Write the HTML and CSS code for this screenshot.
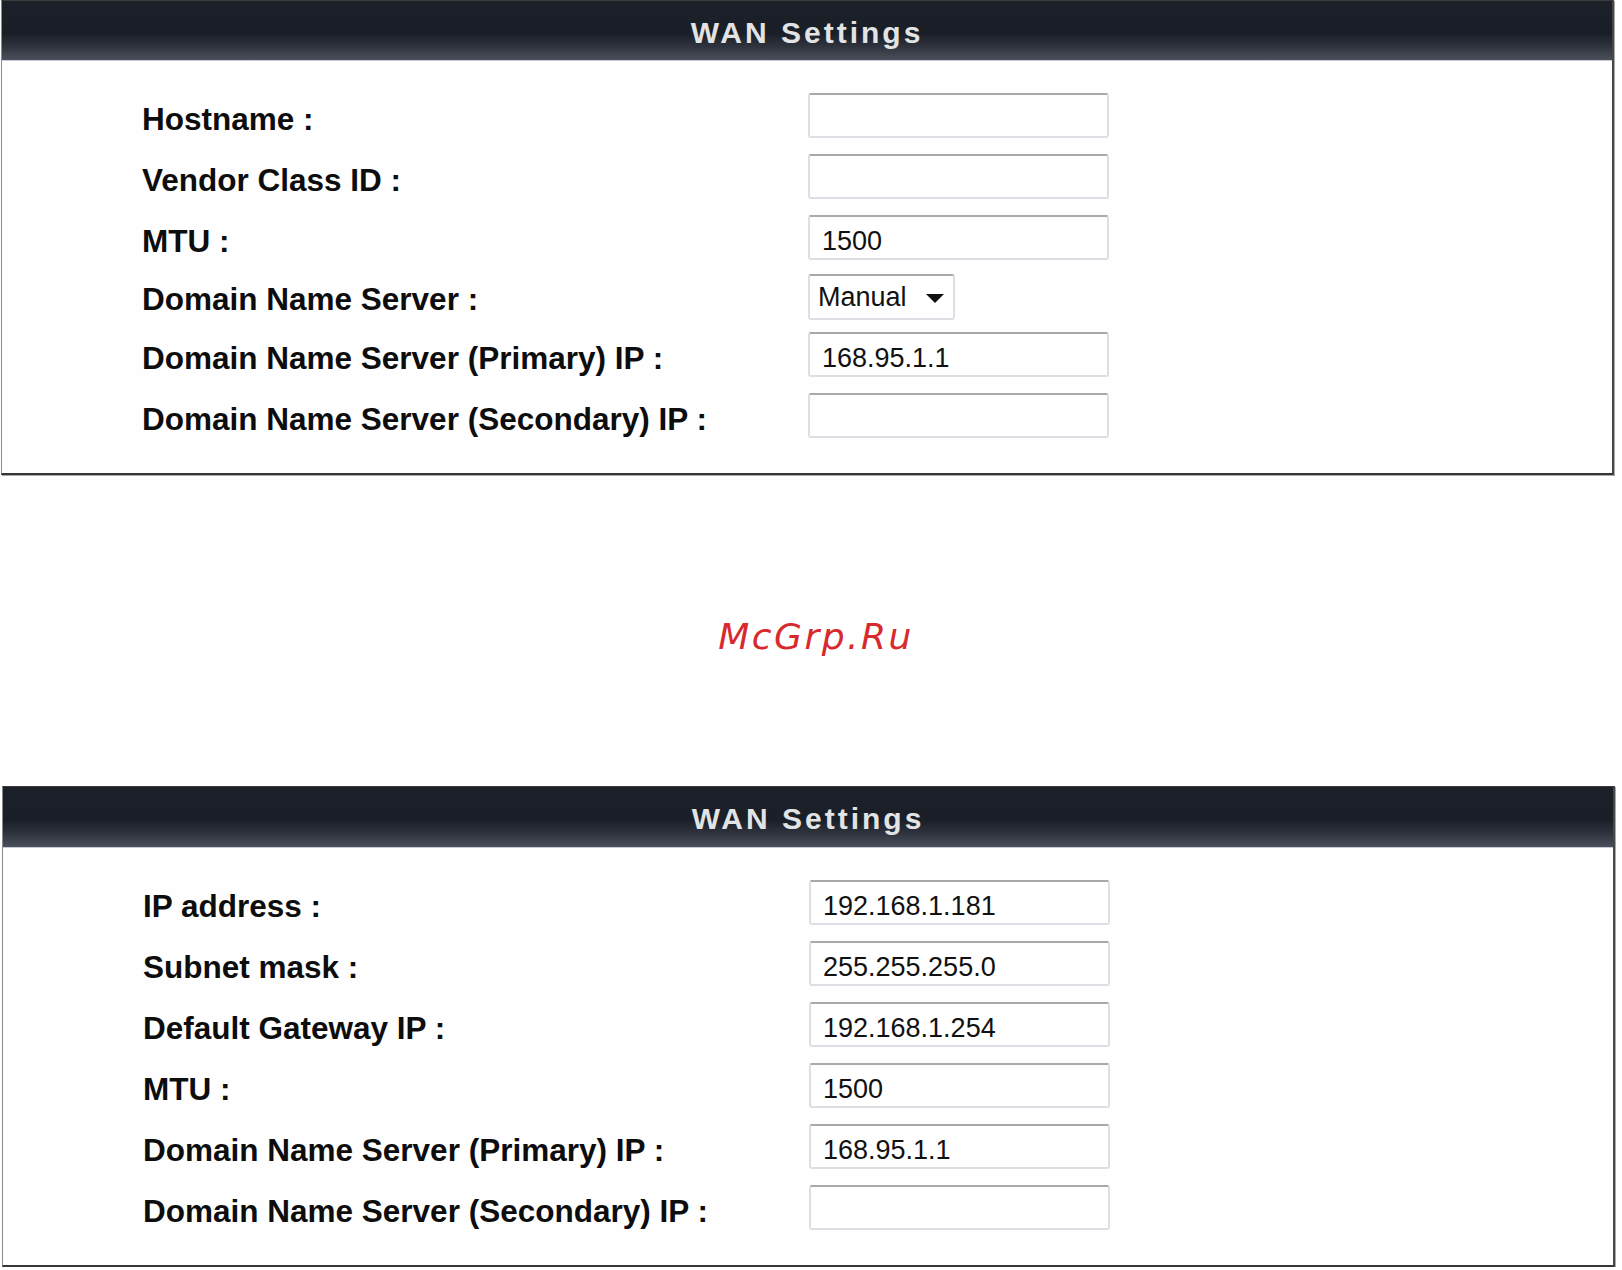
FILE: index.html
```html
<!DOCTYPE html>
<html lang="en">
<head>
  <meta charset="UTF-8" />
  <meta name="viewport" content="width=device-width, initial-scale=1.0"/>
  <title>WAN Settings</title>
  <link rel="stylesheet" href="styles.css">
</head>
<body>
  <div class="panel panel-first">
    <div class="panel-head">WAN Settings</div>
    <div class="panel-body">
      <label class="field-label">Hostname :</label>
      <input class="text-box" type="text" value="" />

      <label class="field-label">Vendor Class ID :</label>
      <input class="text-box" type="text" value="" />

      <label class="field-label">MTU :</label>
      <input class="text-box" type="text" value="1500" />

      <label class="field-label">Domain Name Server :</label>
      <span class="select-wrap">
        <select class="select-box">
          <option>Manual</option>
          <option>Auto</option>
        </select>
      </span>

      <label class="field-label">Domain Name Server (Primary) IP :</label>
      <input class="text-box" type="text" value="168.95.1.1" />

      <label class="field-label">Domain Name Server (Secondary) IP :</label>
      <input class="text-box" type="text" value="" />
    </div>
  </div>

  <div class="watermark">McGrp.Ru</div>

  <div class="panel panel-second">
    <div class="panel-head">WAN Settings</div>
    <div class="panel-body">
      <label class="field-label">IP address :</label>
      <input class="text-box" type="text" value="192.168.1.181" />

      <label class="field-label">Subnet mask :</label>
      <input class="text-box" type="text" value="255.255.255.0" />

      <label class="field-label">Default Gateway IP :</label>
      <input class="text-box" type="text" value="192.168.1.254" />

      <label class="field-label">MTU :</label>
      <input class="text-box" type="text" value="1500" />

      <label class="field-label">Domain Name Server (Primary) IP :</label>
      <input class="text-box" type="text" value="168.95.1.1" />

      <label class="field-label">Domain Name Server (Secondary) IP :</label>
      <input class="text-box" type="text" value="" />
    </div>
  </div>
</body>
</html>
```

FILE: styles.css
```css
* {
  box-sizing: border-box;
}
body {
  margin: 0;
  background: #fff;
  font-family: "Liberation Sans", Arial, sans-serif;
  color: #111;
}
.panel {
  width: 1613px;
  background: #fefefe;
  border-top: 1px solid #3b3b3b;
  border-left: 1px solid #8a8a8a;
  border-right: 2px solid #474747;
  border-bottom: 2px solid #363636;
  box-shadow: 1px 1px 0 #a8a8a8;
}
.panel-first {
  margin-left: 1px;
}
.panel-second {
  margin-left: 2px;
}
.panel-head {
  height: 61px;
  padding-top: 5px;
  line-height: 54px;
  text-align: center;
  font-size: 30px;
  font-weight: bold;
  letter-spacing: 3px;
  color: #e2e3e5;
  background: linear-gradient(to bottom, #1b2029 0%, #191e27 55%, #2f343e 78%, #4b505c 100%);
  border-bottom: 1px solid #c6cad6;
}
.panel-first .panel-head {
  height: 60px;
}
.panel-body {
  display: grid;
  grid-template-columns: 666px 301px;
  row-gap: 16px;
  align-items: center;
  padding: 32px 0 35px 140px;
}
.panel-second .panel-body {
  padding-top: 32px;
  padding-bottom: 35px;
}
.field-label {
  padding-top: 6px;
  font-size: 31.5px;
  line-height: 34px;
  font-weight: bold;
  color: #0d0d0d;
  white-space: nowrap;
}
.text-box {
  width: 301px;
  height: 45px;
  margin: 0;
  padding: 8px 10px 0 12px;
  font-family: "Liberation Sans", Arial, sans-serif;
  font-size: 27px;
  color: #111;
  background: #fff;
  border: 2px solid #dcdfe5;
  border-top-color: #a9a9ab;
  border-radius: 3px;
  outline: none;
}
.select-wrap {
  position: relative;
  justify-self: start;
  width: 147px;
  height: 46px;
  margin: -2px 0 -4px;
}
.select-box {
  -webkit-appearance: none;
  appearance: none;
  width: 147px;
  height: 46px;
  margin: 0;
  padding: 0 0 0 8px;
  font-family: "Liberation Sans", Arial, sans-serif;
  font-size: 27px;
  color: #111;
  background: #fff;
  border: 2px solid #dcdfe5;
  border-top-color: #a9a9ab;
  border-radius: 3px;
  outline: none;
}
.select-wrap::after {
  content: "";
  position: absolute;
  left: 118px;
  top: 20px;
  border-left: 9px solid transparent;
  border-right: 9px solid transparent;
  border-top: 9px solid #111;
  pointer-events: none;
}
.watermark {
  height: 311px;
  padding: 144px 0 0 10px;
  text-align: center;
  font-family: "DejaVu Sans", Verdana, sans-serif;
  font-style: italic;
  font-size: 36px;
  line-height: 36px;
  letter-spacing: 2.5px;
  color: #d82a2e;
}
```
